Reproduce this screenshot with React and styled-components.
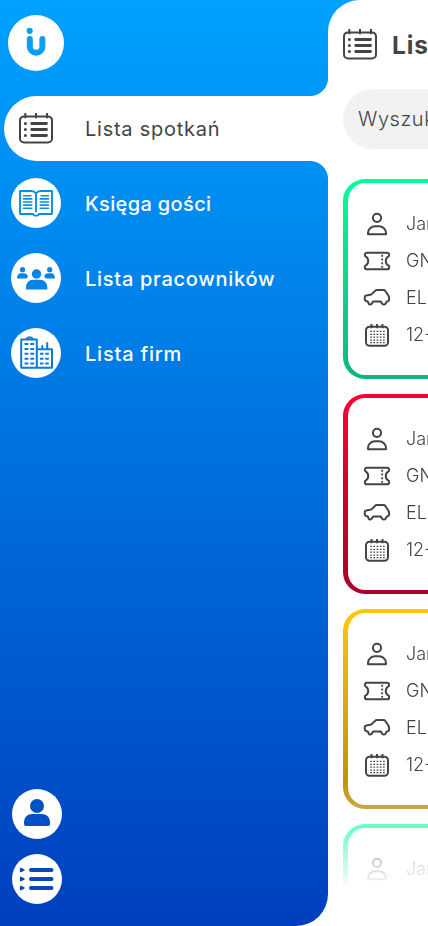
import React from "react";
import styled, { createGlobalStyle, css } from "styled-components";

const GlobalStyle = createGlobalStyle`
  * { box-sizing: border-box; }
  body { margin: 0; background: #fff; overflow: hidden; }
`;

const Screen = styled.div`
  display: flex;
  width: 428px;
  height: 926px;
  overflow: hidden;
  background: #fff;
  color: #444;
  font-family: Inter, "Noto Sans", sans-serif;
`;

const Sidebar = styled.aside`
  flex: 0 0 328px;
  display: flex;
  flex-direction: column;
  padding: 15px 0 22px;
  border-bottom-right-radius: 32px;
  background: linear-gradient(#00a2ff, #003fbd);
`;

const Logo = styled.div`
  flex: none;
  width: 56px;
  height: 56px;
  margin-left: 8px;
  border-radius: 50%;
  background: #fff;
  svg { display: block; }
`;

const Menu = styled.nav`
  display: flex;
  flex-direction: column;
  gap: 25px;
  margin-top: 25px;
`;

const MenuItem = styled.a`
  display: flex;
  align-items: center;
  height: 50px;
  padding-left: 11px;
  color: #fff;
  font-size: 20px;
  font-weight: 500;
  white-space: nowrap;
  ${(p) => p.$active && css`
    position: relative;
    height: 65px;
    margin: 0 0 -8px 3.5px;
    padding-left: 7.5px;
    border-radius: 32.5px 0 0 32.5px;
    background: #fff;
    color: #444;
    font-weight: 400;
    &::before, &::after {
      content: "";
      position: absolute;
      right: 0;
      width: 18px;
      height: 18px;
    }
    &::before {
      bottom: 100%;
      background: radial-gradient(circle at 0 0, transparent 17.5px, #fff 18.5px);
    }
    &::after {
      top: 100%;
      background: radial-gradient(circle at 0 100%, transparent 17.5px, #fff 18.5px);
    }
  `}
`;

const MenuLabel = styled.span`
  margin-left: 24px;
  padding-top: ${(p) => p.$drop}px;
  letter-spacing: ${(p) => p.$track}px;
`;

const RoundIcon = styled.span`
  display: flex;
  flex: none;
  align-items: center;
  justify-content: center;
  width: 50px;
  height: 50px;
  border-radius: 50%;
  background: #fff;
  color: ${(p) => p.$color};
`;

const SidebarFooter = styled.div`
  display: flex;
  flex-direction: column;
  gap: 15px;
  margin-top: auto;
  padding-left: 12px;
`;

const ContentFrame = styled.div`
  flex: 1;
  min-width: 0;
  background: linear-gradient(#00a2ff, #009eff 32px, #fff 32px);
`;

const Content = styled.main`
  height: 926px;
  overflow: hidden;
  padding: 0 0 0 15px;
  border-top-left-radius: 32px;
  background: #fff;
`;

const Header = styled.header`
  display: flex;
  align-items: center;
  height: 89px;
`;

const Title = styled.h1`
  margin: 0 0 0 15px;
  font-size: 24.5px;
  font-weight: 700;
  letter-spacing: 0.9px;
  white-space: nowrap;
`;

const Search = styled.div`
  display: flex;
  align-items: center;
  width: 320px;
  height: 60px;
  padding-left: 15px;
  border-radius: 30px;
  background: #f2f2f2;
  font-size: 20px;
  font-weight: 300;
  letter-spacing: 0.55px;
`;

const Cards = styled.section`
  display: flex;
  flex-direction: column;
  gap: 15px;
  height: 777px;
  padding-top: 30px;
  overflow: hidden;
  mask-image: linear-gradient(#000 632px, transparent 740px);
`;

const Card = styled.article`
  flex: none;
  width: 320px;
  height: 200px;
  padding: 22px 0 0 15px;
  border: solid transparent;
  border-width: 4px 5px;
  border-radius: 22px;
  background: linear-gradient(#fff, #fff) padding-box,
    linear-gradient(${(p) => p.$from}, ${(p) => p.$to}) border-box;
`;

const CardRow = styled.div`
  display: flex;
  align-items: center;
  gap: 15px;
  height: 37px;
  font-size: 18px;
  font-weight: 300;
  white-space: nowrap;
`;

const Icon = ({ w, h, children, stroke = 2 }) => (
  <svg width={w} height={h} viewBox={`0 0 ${w} ${h}`} fill="none" stroke="currentColor"
    strokeWidth={stroke} strokeLinecap="round" strokeLinejoin="round" overflow="visible">
    {children}
  </svg>
);

const MeetingsIcon = () => (
  <Icon w={34} h={31}>
    <rect x="1" y="3.4" width="32" height="26" rx="4" />
    <path d="M6.3 0v5.2M17 0v5.2M28 0v5.2" strokeLinecap="butt" />
    <path d="M12.7 10.5h14.8M12.7 16.5h14.8M12.7 22.5h14.8" strokeWidth="2.8" />
    <path d="M6.4 10.5h.01M6.4 16.5h.01M6.4 22.5h.01" strokeWidth="3" />
  </Icon>
);

const BookIcon = () => (
  <Icon w={34} h={27} stroke={1.9}>
    <path d="M17 3.5C15.8 1.7 14.3 1 12.5 1H1v23h13.2c.2 1 .9 1.6 1.8 1.6h2c.9 0 1.6-.6 1.8-1.6H33V1H21.5C19.7 1 18.2 1.7 17 3.5zM17 3.5v18" />
    <path d="M4.5 5.7h7.3M4.5 8.9h8.3M4.5 12h8.3M4.5 15.1h8.3M4.5 18.2h8.3M22.2 5.7h7.3M21.2 8.9h8.3M21.2 12h8.3M21.2 15.1h8.3M21.2 18.2h8.3" strokeWidth="1.6" />
  </Icon>
);

const PeopleIcon = () => (
  <Icon w={38} h={23}>
    <g fill="currentColor" stroke="none">
      <circle cx="19.5" cy="7" r="4.7" />
      <path d="M9 22.5v-2.2c0-4.7 3-7.6 7.2-7.6h6.8c4.2 0 7.3 2.9 7.3 7.6v2.2z" />
      <circle cx="5.5" cy="2.7" r="2.6" />
      <circle cx="32.7" cy="2.7" r="2.6" />
      <path d="M0 11.4c0-3.3 1.5-5.2 4.2-5.2h2.6c2.4 0 3.7 1.4 4.2 3.4L9.5 11.4zM38 11.4c0-3.3-1.5-5.2-4.2-5.2h-2.4c-2.4 0-3.7 1.4-4.2 3.4l1.5 1.8z" />
    </g>
  </Icon>
);

const BuildingsIcon = () => (
  <Icon w={33} h={32}>
    <path d="M1.2 2.6h15.6v28.2H1.2zM16.8 12.3H32v18.5H16.8" />
    <path d="M6.8 1.6l1.5-1h2.8l1.5 1M22.2 11.6V9M27.2 11.6V6.1" />
    <path d="M4.5 7h3.9M10.3 7h3.9M4.5 11.9h3.9M10.3 11.9h3.9M4.5 16.8h3.9M10.3 16.8h3.9M4.5 21.7h3.9M10.3 21.7h3.9M4.5 26.6h3.9M10.3 26.6h3.9M20 16.8h3.5M25.3 16.8h3.5M20 21.7h3.5M25.3 21.7h3.5M20 26.6h3.5M25.3 26.6h3.5" strokeLinecap="butt" />
  </Icon>
);

const AccountIcon = () => (
  <Icon w={26} h={30}>
    <g fill="currentColor" stroke="none">
      <circle cx="13" cy="7" r="7" />
      <path d="M0 25v-1.5c0-5.2 3.5-8.5 8.5-8.5h9c5 0 8.5 3.3 8.5 8.5V25q0 2-2 2H2q-2 0-2-2z" />
    </g>
  </Icon>
);

const ListIcon = () => (
  <Icon w={34} h={24}>
    <path d="M11 3h20.5M11 12h20.5M11 21h20.5" strokeWidth="4" />
    <path d="M.8 1.6v2.8L3.8 3zM.8 10.6v2.8l3-1.4zM.8 19.6v2.8l3-1.4z" strokeWidth="1.8" fill="currentColor" />
  </Icon>
);

const PersonIcon = () => (
  <Icon w={28} h={24}>
    <circle cx="14" cy="5.8" r="4.1" />
    <path d="M5 22v-1c0-4 3.2-6.7 7-6.7h4c3.8 0 7 2.7 7 6.7v1q0 .3-.3.3H5.3q-.3 0-.3-.3z" />
  </Icon>
);

const TicketIcon = () => (
  <Icon w={28} h={20}>
    <path d="M4 1.7h20q2 0 2.2 2c.2 1.2-.5 1.7-1.3 2.1-2.8 1.5-2.8 6.9 0 8.4.8.4 1.5.9 1.3 2.1q-.2 2-2.2 2H4q-2 0-2.2-2c-.2-1.2.5-1.7 1.3-2.1 2.8-1.5 2.8-6.9 0-8.4-.8-.4-1.5-.9-1.3-2.1q.2-2 2.2-2z" />
    <path d="M19.2 3.7v13" strokeDasharray="2 1.8" strokeLinecap="butt" strokeWidth="1.8" />
  </Icon>
);

const CarIcon = () => (
  <Icon w={28} h={17}>
    <path d="M5 12.7l-2.4-.9c-.5-.2-.8-.6-.8-1.2V8c0-.9.5-1.5 1.4-1.6l5-.8 4-3.8c.5-.5 1-.7 1.7-.7h6.7c.7 0 1.3.3 1.7.9l2.9 4.3c.6 1 .9 1.9.9 3v1.4c0 .7-.3 1-.9 1.3l-1.5.7-1.2 2c-.6 1.1-2.6 1.1-3.3 0l-1.5-2.3h-7.5l-1.5 2.3c-.7 1.1-2.5 1.1-3.1-.2z" />
  </Icon>
);

const CalendarIcon = () => (
  <Icon w={28} h={24}>
    <rect x="3" y="3.8" width="22" height="18.9" rx="3.5" />
    <path d="M8.5 1V5.2M14 1V5.2M19.5 1V5.2" strokeLinecap="butt" />
    <path d="M7.2 8.4h14.6M7.2 11.3h14.6M7.2 14.2h14.6M7.2 17.1h14.6M7.2 19.7h14.6" strokeWidth="1.3" strokeDasharray="1.7 1.5" strokeLinecap="butt" />
  </Icon>
);

const menu = [
  { label: "Księga gości", icon: BookIcon, color: "#0890e2", track: 0.35 },
  { label: "Lista pracowników", icon: PeopleIcon, color: "#0784e5", track: 0.72 },
  { label: "Lista firm", icon: BuildingsIcon, color: "#087bdc", track: 0.8 },
];

const details = [
  { icon: PersonIcon, text: "Jan" },
  { icon: TicketIcon, text: "GNI" },
  { icon: CarIcon, text: "ELE" },
  { icon: CalendarIcon, text: "12-" },
];

const cards = [
  ["#00ff99", "#11b47d"],
  ["#ff0033", "#aa0028"],
  ["#ffc60a", "#b88b00"],
  ["#00ff99", "#11b47d"],
];

export default function App() {
  return (
    <>
      <GlobalStyle />
      <Screen>
        <Sidebar>
          <Logo>
            <svg width="56" height="56" viewBox="0 0 56 56" fill="none">
              <circle cx="21.7" cy="15.8" r="3.1" fill="#08a0f5" />
              <path d="M21.8 24v7.5a6.3 6.3 0 0 0 12.6 0V24" stroke="#08a0f5" strokeWidth="6" strokeLinecap="round" />
            </svg>
          </Logo>
          <Menu>
            <MenuItem $active>
              <RoundIcon $color="#444"><MeetingsIcon /></RoundIcon>
              <MenuLabel $track={0.75} $drop={0}>Lista spotkań</MenuLabel>
            </MenuItem>
            {menu.map(({ label, icon: Glyph, color, track }) => (
              <MenuItem key={label}>
                <RoundIcon $color={color}><Glyph /></RoundIcon>
                <MenuLabel $track={track} $drop={2}>{label}</MenuLabel>
              </MenuItem>
            ))}
          </Menu>
          <SidebarFooter>
            <RoundIcon $color="#0550c4"><AccountIcon /></RoundIcon>
            <RoundIcon $color="#0549bd"><ListIcon /></RoundIcon>
          </SidebarFooter>
        </Sidebar>
        <ContentFrame>
          <Content>
            <Header>
              <MeetingsIcon />
              <Title>Lista spotkań</Title>
            </Header>
            <Search>Wyszukaj</Search>
            <Cards>
              {cards.map(([from, to], i) => (
                <Card key={i} $from={from} $to={to}>
                  {details.map(({ icon: Glyph, text }) => (
                    <CardRow key={text}><Glyph />{text}</CardRow>
                  ))}
                </Card>
              ))}
            </Cards>
          </Content>
        </ContentFrame>
      </Screen>
    </>
  );
}
